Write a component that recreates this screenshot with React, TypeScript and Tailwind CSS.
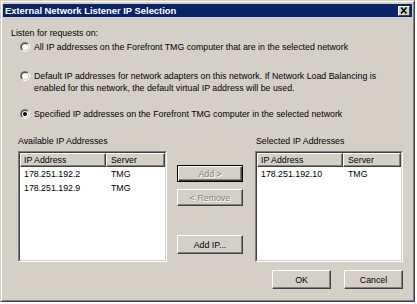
import React from "react";

function Radio({ checked }: { checked?: boolean }) {
  return (
    <div className="relative w-[10px] h-[10px] shrink-0 rounded-full border border-t-[#808080] border-l-[#808080] border-r-white border-b-white">
      <div className="absolute inset-0 rounded-full bg-white border border-t-[#404040] border-l-[#404040] border-r-[#d4d0c8] border-b-[#d4d0c8] flex items-center justify-center">
        {checked && <div className="w-[4px] h-[4px] rounded-full bg-black" />}
      </div>
    </div>
  );
}

function Btn({
  children,
  w,
  h,
  disabled,
  def,
}: {
  children: React.ReactNode;
  w: string;
  h: string;
  disabled?: boolean;
  def?: boolean;
}) {
  return (
    <div
      className={
        "flex items-center justify-center bg-[#d4d0c8] border " +
        (def
          ? "border-black shadow-[inset_1px_1px_0_#fff,inset_-1px_-1px_0_#404040,inset_-2px_-2px_0_#808080] "
          : "border-t-white border-l-white border-r-[#404040] border-b-[#404040] shadow-[inset_-1px_-1px_0_#808080] ") +
        w +
        " " +
        h +
        (disabled ? " text-[#808080] [text-shadow:1px_1px_0_#fff]" : " text-black")
      }
    >
      {children}
    </div>
  );
}

function ListBox({ rows }: { rows: [string, string][] }) {
  return (
    <div className="w-full h-[111px] bg-white border border-t-[#808080] border-l-[#808080] border-r-white border-b-white">
      <div className="w-full h-full border border-t-[#404040] border-l-[#404040] border-r-[#d4d0c8] border-b-[#d4d0c8] flex flex-col">
        <div className="flex h-[14px] shrink-0">
          <div className="w-[86px] h-full bg-[#d4d0c8] border border-t-white border-l-white border-r-[#404040] border-b-[#404040] shadow-[inset_-1px_-1px_0_#808080] flex items-center pl-[3px] leading-none">
            IP Address
          </div>
          <div className="flex-1 h-full bg-[#d4d0c8] border border-t-white border-l-white border-r-[#404040] border-b-[#404040] shadow-[inset_-1px_-1px_0_#808080] flex items-center pl-[4px] leading-none">
            Server
          </div>
        </div>
        {rows.map(([ip, s]) => (
          <div key={ip} className="flex h-[14px] items-center leading-none">
            <div className="w-[86px] pl-[4px]">{ip}</div>
            <div className="pl-[5px]">{s}</div>
          </div>
        ))}
      </div>
    </div>
  );
}

export default function App() {
  return (
    <div className="w-[417px] h-[304px] bg-white font-['Liberation_Sans',Arial,sans-serif] text-[8.8px] text-black leading-[12px]">
      <div className="w-[415px] h-[302px] bg-[#d4d0c8] border border-t-[#d4d0c8] border-l-[#d4d0c8] border-r-[#404040] border-b-[#404040] shadow-[inset_1px_1px_0_#fff,inset_-1px_-1px_0_#808080] px-[2px] pt-[3px] flex flex-col">
        {/* title bar */}
        <div className="h-[13px] bg-[#0a246a] flex items-center justify-between pl-[2px] pr-[2px] shrink-0">
          <span className="text-white font-bold text-[9.4px] leading-none">
            External Network Listener IP Selection
          </span>
          <div className="w-[12px] h-[10px] bg-[#d4d0c8] border border-t-white border-l-white border-r-[#404040] border-b-[#404040] flex items-center justify-center">
            <svg width="8" height="7" viewBox="0 0 8 7">
              <path d="M1 0.5 L6.5 6.5 M6.5 0.5 L1 6.5" stroke="#000" strokeWidth="1.6" />
            </svg>
          </div>
        </div>

        {/* content */}
        <div className="flex flex-col pl-[8px] pr-[9px]">
          <div className="mt-[10px] h-[12px]">Listen for requests on:</div>

          <div className="mt-[2px] flex items-start gap-[4px] pl-[9px]">
            <div className="pt-[1px]">
              <Radio />
            </div>
            <div>All IP addresses on the Forefront TMG computer that are in the selected network</div>
          </div>

          <div className="mt-[17px] flex items-start gap-[4px] pl-[9px]">
            <div className="pt-[1px]">
              <Radio />
            </div>
            <div>
              Default IP addresses for network adapters on this network. If Network Load Balancing is
              <br />
              enabled for this network, the default virtual IP address will be used.
            </div>
          </div>

          <div className="mt-[14px] flex items-start gap-[4px] pl-[9px]">
            <div className="pt-[1px]">
              <Radio checked />
            </div>
            <div>Specified IP addresses on the Forefront TMG computer in the selected network</div>
          </div>

          <div className="mt-[15px] flex pl-[7px]">
            <div className="w-[149px] flex flex-col">
              <div className="h-[12px]">Available IP Addresses</div>
              <div className="mt-[4px]">
                <ListBox
                  rows={[
                    ["178.251.192.2", "TMG"],
                    ["178.251.192.9", "TMG"],
                  ]}
                />
              </div>
            </div>

            <div className="ml-[10px] w-[66px] flex flex-col pt-[30px]">
              <Btn w="w-[66px]" h="h-[17px]" disabled def>
                Add &gt;
              </Btn>
              <div className="mt-[7px]">
                <Btn w="w-[66px]" h="h-[17px]" disabled>
                  &lt; Remove
                </Btn>
              </div>
              <div className="mt-[29px]">
                <Btn w="w-[66px]" h="h-[19px]">
                  Add IP...
                </Btn>
              </div>
            </div>

            <div className="ml-[12px] w-[148px] flex flex-col">
              <div className="h-[12px] pl-[1px]">Selected IP Addresses</div>
              <div className="mt-[4px]">
                <ListBox rows={[["178.251.192.10", "TMG"]]} />
              </div>
            </div>
          </div>

          <div className="mt-[8px] flex justify-end gap-[13px]">
            <Btn w="w-[59px]" h="h-[19px]">
              OK
            </Btn>
            <Btn w="w-[59px]" h="h-[19px]">
              Cancel
            </Btn>
          </div>
        </div>
      </div>
    </div>
  );
}
